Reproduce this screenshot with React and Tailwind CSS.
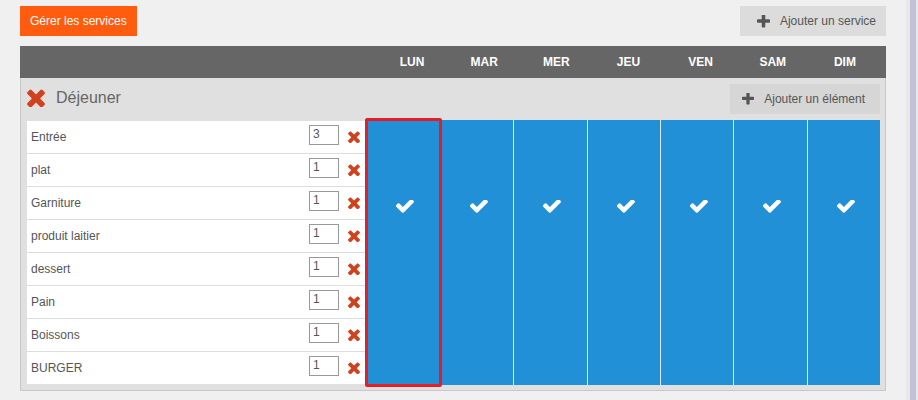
import React from "react";

const days = ["LUN", "MAR", "MER", "JEU", "VEN", "SAM", "DIM"];

const items = [
  { name: "Entrée", qty: 3 },
  { name: "plat", qty: 1 },
  { name: "Garniture", qty: 1 },
  { name: "produit laitier", qty: 1 },
  { name: "dessert", qty: 1 },
  { name: "Pain", qty: 1 },
  { name: "Boissons", qty: 1 },
  { name: "BURGER", qty: 1 },
];

// icônes style font-awesome 4
function IconTimes({ className }) {
  return (
    <svg viewBox="302 330 1188 1196" className={className} fill="currentColor">
      <path d="M1490 1322q0 40-28 68l-136 136q-28 28-68 28t-68-28l-294-294-294 294q-28 28-68 28t-68-28l-136-136q-28-28-28-68t28-68l294-294-294-294q-28-28-28-68t28-68l136-136q28-28 68-28t68 28l294 294 294-294q28-28 68-28t68 28l136 136q28 28 28 68t-28 68l-294 294 294 294q28 28 28 68z" />
    </svg>
  );
}

function IconCheck({ className }) {
  return (
    <svg viewBox="128 430 1543 1100" className={className} fill="currentColor">
      <path d="M1671 566q0 40-28 68l-724 724-136 136q-28 28-68 28t-68-28l-136-136-362-362q-28-28-28-68t28-68l136-136q28-28 68-28t68 28l294 295 656-657q28-28 68-28t68 28l136 136q28 28 28 68z" />
    </svg>
  );
}

function IconPlus({ className }) {
  return (
    <svg viewBox="192 192 1408 1408" className={className} fill="currentColor">
      <path d="M1600 736v192q0 40-28 68t-68 28h-416v416q0 40-28 68t-68 28h-192q-40 0-68-28t-28-68v-416h-416q-40 0-68-28t-28-68v-192q0-40 28-68t68-28h416v-416q0-40 28-68t68-28h192q40 0 68 28t28 68v416h416q40 0 68 28t28 68z" />
    </svg>
  );
}

function ItemRow({ item, last }) {
  return (
    <div
      className={
        "flex items-center pl-[4px] pr-[5px] " +
        (last ? "h-[32px]" : "h-[33px] border-b border-[#dddddd]")
      }
    >
      <span className="flex-1 text-[12px] text-[#555]">{item.name}</span>
      <div className="mb-[4px] h-[20px] w-[30px] border border-[#999] bg-white px-[3px] text-[12px] leading-[16px] text-[#555]">
        {item.qty}
      </div>
      <IconTimes className="ml-[9px] h-[12px] w-[12px] text-[#cf421d]" />
    </div>
  );
}

export default function App() {
  return (
    <div
      className="flex min-h-[400px] w-full bg-[#f0f0f0]"
      style={{ fontFamily: '"Liberation Sans", Arial, sans-serif' }}
    >
      <div className="flex-1 px-5 pt-[6px]">
        <div className="flex w-[866px] items-start justify-between">
          <button className="h-[30px] bg-[#ff5c0f] px-[10px] text-[12px] text-white">
            Gérer les services
          </button>
          <button className="flex h-[30px] items-center bg-[#dcdcdc] pl-[17px] pr-[10px] text-[12px] text-[#555]">
            <IconPlus className="mr-[10px] h-[13px] w-[13px] text-[#555]" />
            Ajouter un service
          </button>
        </div>

        <div className="mt-[10px] w-[866px]">
          {/* en-tête jours */}
          <div className="flex h-[32px] items-center bg-[#666666] pr-[5px] text-[12px] font-bold text-white">
            <div className="w-[356px]" />
            {days.map((d) => (
              <div key={d} className="flex-1 text-center">
                {d}
              </div>
            ))}
          </div>

          {/* service */}
          <div className="border border-t-0 border-[#c8c8c8] bg-[#e0e0e0] pb-[5px] pl-[6px] pr-[5px] pt-[6px]">
            <div className="flex h-[30px] items-center justify-between">
              <div className="mb-[2px] flex items-center">
                <IconTimes className="h-[18px] w-[18px] text-[#cf421d]" />
                <span className="ml-[11px] text-[16px] text-[#666]">Déjeuner</span>
              </div>
              <button className="flex h-[30px] items-center bg-[#d6d6d6] pl-[12px] pr-[15px] text-[12px] text-[#555]">
                <IconPlus className="mr-[10px] h-[12px] w-[12px] text-[#555]" />
                Ajouter un élément
              </button>
            </div>

            <div className="mt-[6px] flex">
              <div className="my-px w-[338px] bg-white">
                {items.map((it, i) => (
                  <ItemRow key={it.name} item={it} last={i === items.length - 1} />
                ))}
              </div>
              <div className="flex h-[265px] flex-1">
                {days.map((d, i) => (
                  <div
                    key={d}
                    className={
                      "relative flex justify-center bg-[#2290d6] pl-[4px] pt-[80px] " +
                      (i === 0 ? "w-[75px] shrink-0" : "flex-1 border-l border-[#dbe9f4]")
                    }
                  >
                    <IconCheck className="h-[13px] w-[18px] text-white" />
                    {i === 0 && (
                      <div className="absolute -bottom-[2px] -top-[2px] left-0 -right-[2px] z-10 rounded-[2px] border-[3px] border-[#e81c24]" />
                    )}
                  </div>
                ))}
              </div>
            </div>
          </div>
        </div>
      </div>

      {/* barre de défilement */}
      <div className="flex w-[12px] bg-[#e8e8e8] pl-[4px] pr-[2px]">
        <div className="w-[6px] bg-[#c2c2d6]" />
      </div>
    </div>
  );
}
